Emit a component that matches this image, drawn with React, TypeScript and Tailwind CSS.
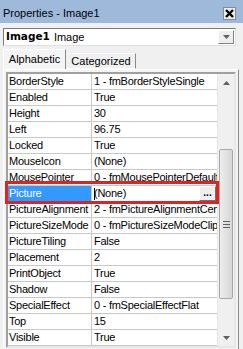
const rows: [string, string][] = [
  ["BorderStyle", "1 - fmBorderStyleSingle"],
  ["Enabled", "True"],
  ["Height", "30"],
  ["Left", "96.75"],
  ["Locked", "True"],
  ["MouseIcon", "(None)"],
  ["MousePointer", "0 - fmMousePointerDefault"],
  ["Picture", "(None)"],
  ["PictureAlignment", "2 - fmPictureAlignmentCenter"],
  ["PictureSizeMode", "0 - fmPictureSizeModeClip"],
  ["PictureTiling", "False"],
  ["Placement", "2"],
  ["PrintObject", "True"],
  ["Shadow", "False"],
  ["SpecialEffect", "0 - fmSpecialEffectFlat"],
  ["Top", "15"],
  ["Visible", "True"],
];

function Arrow(props: { up?: boolean }) {
  return (
    <svg width="7" height="4" viewBox="0 0 7 4">
      {props.up ? <polygon points="0,4 7,4 3.5,0" fill="#606060" /> : <polygon points="0,0 7,0 3.5,4" fill="#606060" />}
    </svg>
  );
}

function Row(props: { name: string; value: string }) {
  const selected = props.name === "Picture";
  return (
    <div className="flex h-[16px] shrink-0 border-b border-[#c8c8c8]">
      <div
        className={
          "w-[84px] shrink-0 border-r border-[#c8c8c8] pl-[1px] leading-[15px] whitespace-nowrap overflow-hidden " +
          (selected ? "bg-[#3399ff] text-white" : "")
        }
      >
        {props.name}
      </div>
      <div className="flex-1 min-w-0 flex items-center pl-[2px] whitespace-nowrap overflow-hidden leading-[15px]">
        {selected && <span className="w-[1px] h-[12px] bg-black mr-[-1px]"></span>}
        <span className="flex-1 overflow-hidden">{props.value}</span>
        {selected && (
          <span className="w-[17px] h-[15px] shrink-0 mr-[1px] bg-[#eeeeee] border border-t-white border-l-white border-r-[#707070] border-b-[#707070] flex items-end justify-center font-bold text-[10px] leading-[10px] pb-[2px] tracking-normal">
            ...
          </span>
        )}
      </div>
    </div>
  );
}

export default function App() {
  return (
    <div className="relative w-[243px] h-[349px] bg-[#f0f0f0] flex flex-col overflow-hidden text-[11px] text-black font-['Liberation_Sans',Arial,sans-serif]">
      {/* title bar */}
      <div className="h-[23px] shrink-0 bg-[#9fb9da] flex items-center justify-between pl-[3px] pr-[7px]">
        <span className="text-[11px] pt-[3px]">Properties - Image1</span>
        <span className="mt-[4px] w-[13px] h-[13px] bg-[#ececec] border border-[#8a8a8a] flex items-center justify-center">
          <svg width="9" height="9" viewBox="0 0 9 9">
            <path d="M1 1 L8 8 M8 1 L1 8" stroke="#000" strokeWidth="2.4" />
          </svg>
        </span>
      </div>

      <div className="flex-1 flex flex-col pl-[3px] pr-[4px] pb-[3px]">
        {/* object dropdown */}
        <div className="mt-[5px] mr-[3px] h-[18px] bg-white border border-t-[#7a7a7a] border-l-[#7a7a7a] border-r-[#e0e0e0] border-b-[#e0e0e0] flex items-center">
          <span className="pl-[2px] font-bold text-[10.5px] font-['DejaVu_Sans',sans-serif]">Image1</span>
          <span className="pl-[4px] flex-1">Image</span>
          <span className="w-[16px] h-[14px] mr-[1px] bg-[#eeeeee] border border-t-white border-l-white border-r-[#808080] border-b-[#808080] flex items-center justify-center">
            <Arrow />
          </span>
        </div>

        {/* tabs */}
        <div className="mt-[3px] h-[20px] shrink-0 flex items-end">
          <div className="h-[20px] w-[63px] bg-[#f4f4f4] border-t border-l border-r border-t-white border-l-white border-r-[#8a8a8a] flex items-center justify-center">
            Alphabetic
          </div>
          <div className="h-[16px] w-[69px] ml-[1px] bg-[#f0f0f0] border-t border-r border-t-white border-r-[#8a8a8a] border-b border-b-white flex items-center justify-center">
            Categorized
          </div>
        </div>

        {/* panel */}
        <div className="flex-1 min-h-0 bg-[#f4f4f4] border border-t-white border-l-white border-r-[#8a8a8a] border-b-[#8a8a8a] px-[2px] pt-[2px] pb-[1px] flex">
          <div className="flex-1 min-h-0 bg-white border-2 border-t-[#a0a0a0] border-l-[#a0a0a0] border-r-[#e6e6e6] border-b-[#e6e6e6] flex overflow-hidden">
            <div className="flex-1 min-w-0 flex flex-col overflow-hidden tracking-[-0.25px]">
              {rows.map(([n, v]) => (
                <Row key={n} name={n} value={v} />
              ))}
            </div>
            {/* scrollbar */}
            <div className="w-[17px] shrink-0 bg-[#f0f0f0] border-l border-[#e8e8e8] flex flex-col">
              <div className="h-[17px] shrink-0 flex items-center justify-center">
                <Arrow up />
              </div>
              <div className="flex-1 flex flex-col">
                <div className="h-[58px] shrink-0"></div>
                <div className="h-[150px] shrink-0 mx-[1px] rounded-[2px] border border-[#a8a8a8] bg-gradient-to-r from-[#ededed] to-[#d6d6d6] flex items-center justify-center">
                  <div className="flex flex-col gap-[2px]">
                    <div className="w-[7px] h-[1px] bg-[#606060]"></div>
                    <div className="w-[7px] h-[1px] bg-[#606060]"></div>
                    <div className="w-[7px] h-[1px] bg-[#606060]"></div>
                  </div>
                </div>
              </div>
              <div className="h-[17px] shrink-0 flex items-center justify-center">
                <Arrow />
              </div>
            </div>
          </div>
        </div>
      </div>

      <div className="h-[5px] shrink-0 bg-[#1e1e1e]"></div>

      {/* red highlight around the Picture row */}
      <div className="absolute left-[5px] top-[181px] w-[214px] h-[23px] border-[3px] border-[#e3221f]"></div>
    </div>
  );
}
